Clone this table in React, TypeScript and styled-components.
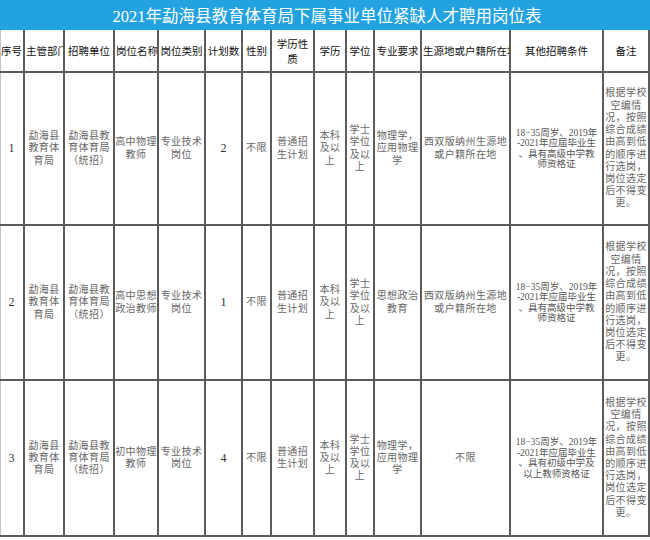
import React from 'react';
import styled, { createGlobalStyle } from 'styled-components';

const GlobalStyle = createGlobalStyle`
  html, body {
    margin: 0;
    padding: 0;
    background: #fff;
  }
`;

const colWidths = [25, 40, 50, 44, 47, 37, 29, 43, 32, 28, 47, 89, 93, 46];
const rowHeights = [43, 153, 155, 156];

const headers: string[][] = [
    ['序号'], ['主管部门'], ['招聘单位'], ['岗位名称'], ['岗位类别'], ['计划数'], ['性别'],
    ['学历性', '质'], ['学历'], ['学位'], ['专业要求'], ['生源地或户籍所在地'], ['其他招聘条件'], ['备注'],
];

type Kind = 'num' | 'text' | 'cond';

// which kind of body cell each column holds
const kinds: Kind[] = [
    'num', 'text', 'text', 'text', 'text', 'num', 'text',
    'text', 'text', 'text', 'text', 'text', 'cond', 'text',
];

const remark = ['根据学校', '空编情', '况，按照', '综合成绩', '由高到低', '的顺序进', '行选岗，', '岗位选定', '后不得变', '更。'];
const unit = ['勐海县', '教育体', '育局'];
const employer = ['勐海县教', '育体育局', '（统招）'];

const rows: string[][][] = [
    [
        ['1'], unit, employer, ['高中物理', '教师'], ['专业技术', '岗位'], ['2'], ['不限'],
        ['普通招', '生计划'], ['本科', '及以', '上'], ['学士', '学位', '及以', '上'],
        ['物理学，', '应用物理', '学'], ['西双版纳州生源地', '或户籍所在地'],
        ['18−35周岁、2019年', '-2021年应届毕业生', '、具有高级中学教', '师资格证'], remark,
    ],
    [
        ['2'], unit, employer, ['高中思想', '政治教师'], ['专业技术', '岗位'], ['1'], ['不限'],
        ['普通招', '生计划'], ['本科', '及以', '上'], ['学士', '学位', '及以', '上'],
        ['思想政治', '教育'], ['西双版纳州生源地', '或户籍所在地'],
        ['18−35周岁、2019年', '-2021年应届毕业生', '、具有高级中学教', '师资格证'], remark,
    ],
    [
        ['3'], unit, employer, ['初中物理', '教师'], ['专业技术', '岗位'], ['4'], ['不限'],
        ['普通招', '生计划'], ['本科', '及以', '上'], ['学士', '学位', '及以', '上'],
        ['物理学，', '应用物理', '学'], ['不限'],
        ['18−35周岁、2019年', '-2021年应届毕业生', '、具有初级中学及', '以上教师资格证'], remark,
    ],
];

const App: React.FC = () => {
    return (
        <>
            <GlobalStyle />
            <Page>
                <TitleBar>2021年勐海县教育体育局下属事业单位紧缺人才聘用岗位表</TitleBar>
                <Table>
                    {headers.map((h, c) => (
                        <HeadCell key={c}>
                            <CellText>
                                {h.map((line, i) => (
                                    <Line key={i}>{line}</Line>
                                ))}
                            </CellText>
                        </HeadCell>
                    ))}
                    {rows.map((row, r) =>
                        row.map((lines, c) => (
                            <BodyCell key={`${r}-${c}`} $kind={kinds[c]}>
                                <CellText>
                                    {lines.map((line, i) => (
                                        <Line key={i}>{line}</Line>
                                    ))}
                                </CellText>
                            </BodyCell>
                        ))
                    )}
                </Table>
            </Page>
        </>
    );
};

export default App;

const Page = styled.div`
width: 650px;
height: 540px;
overflow: hidden;
background: #fff;
`

const TitleBar = styled.div`
height: 30px;
background: #22a2de;
color: #fff;
display: flex;
align-items: center;
justify-content: center;
font-family: "Liberation Serif", "Noto Sans CJK SC", serif;
font-size: 16.5px;
white-space: nowrap;
padding-left: 4px;
`

const Table = styled.div`
display: grid;
grid-template-columns: ${colWidths.map((w) => `${w}px`).join(' ')};
grid-template-rows: ${rowHeights.map((h) => `${h}px`).join(' ')};
box-shadow: inset 1px 0 0 #c4c4c4;
`

const Cell = styled.div`
box-sizing: border-box;
border-right: 2px solid #5b5b5b;
border-bottom: 2px solid #5b5b5b;
display: flex;
align-items: center;
justify-content: center;
overflow: hidden;
text-align: center;
min-width: 0;
`

const HeadCell = styled(Cell)`
font-family: "Noto Sans CJK SC", sans-serif;
font-size: 10.5px;
line-height: 15px;
color: #111;
padding: 0 1px;
`

const BodyCell = styled(Cell)<{ $kind: Kind }>`
font-family: "Liberation Serif", "Noto Sans CJK SC", serif;
color: ${(p) => (p.$kind === 'num' ? '#333' : p.$kind === 'cond' ? '#555' : '#666')};
font-size: ${(p) => (p.$kind === 'num' ? '12px' : p.$kind === 'cond' ? '9.5px' : '10px')};
line-height: ${(p) => (p.$kind === 'cond' ? '10.5px' : '12.2px')};
letter-spacing: ${(p) => (p.$kind === 'text' ? '0.4px' : '0')};
`

const CellText = styled.div`
display: flex;
flex-direction: column;
align-items: safe center;
width: 100%;
min-width: 0;
`

const Line = styled.span`
white-space: nowrap;
`
